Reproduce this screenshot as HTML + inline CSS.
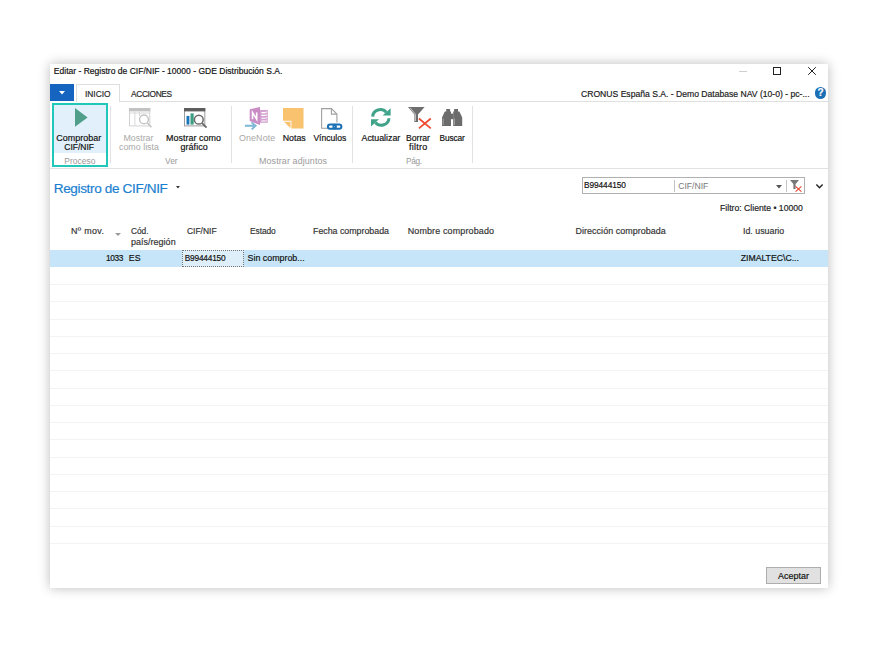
<!DOCTYPE html>
<html lang="es"><head><meta charset="utf-8"><title>Editar - Registro de CIF/NIF</title>
<style>
html,body{margin:0;padding:0;background:#fff;}
body{width:878px;height:652px;position:relative;overflow:hidden;font-family:"Liberation Sans",sans-serif;}
.win{position:absolute;left:50px;top:64px;width:778px;height:524px;background:#fff;box-shadow:0 0 11px rgba(0,0,0,.27);}
.abs{position:absolute;}
.t{position:absolute;white-space:pre;line-height:12px;-webkit-text-stroke:0.18px currentColor;}
.gl{position:absolute;left:50px;width:778px;height:1px;background:#f3f3f3;}
.sep{position:absolute;width:1px;background:#e2e2e2;top:106px;height:57px;}
svg{position:absolute;overflow:visible;}
</style></head><body>
<div class="win"></div>

<!-- title bar controls -->
<div class="abs" style="left:739px;top:70.6px;width:8px;height:1px;background:#cfcfcf"></div>
<div class="abs" style="left:773.3px;top:67px;width:5.6px;height:5.6px;border:1px solid #222;box-sizing:content-box"></div>
<svg style="left:807.5px;top:66.8px" width="8" height="8" viewBox="0 0 8 8"><path d="M0.2 0.2L7.8 7.8M7.8 0.2L0.2 7.8" stroke="#222" stroke-width="1" fill="none"/></svg>

<!-- tab row -->
<div class="abs" style="left:50px;top:83.7px;width:24px;height:17.3px;background:#1565c0"></div>
<svg style="left:58.6px;top:90.8px" width="6" height="4" viewBox="0 0 6 4"><path d="M0 0H6L3 3.6Z" fill="#fff"/></svg>
<div class="abs" style="left:118.5px;top:100.7px;width:709.5px;height:1px;background:#e0e0e0"></div>
<div class="abs" style="left:76.4px;top:83.7px;width:41.8px;height:17.8px;border:1px solid #dedede;border-bottom:none;background:#fff"></div>
<!-- help -->
<div class="abs" style="left:814.6px;top:86.8px;width:11.8px;height:11.8px;border-radius:50%;background:#1a6fb5"></div>
<span class="t" style="left:817.6px;top:86.9px;font-size:10px;font-weight:bold;color:#fff">?</span>

<!-- ribbon -->
<div class="abs" style="left:50px;top:167.8px;width:778px;height:1px;background:#e2e2e2"></div>
<div class="abs" style="left:52.1px;top:103.3px;width:52px;height:59.5px;border:2px solid #21c7b8;background:linear-gradient(#e1f0fa 0,#e1f0fa 48px,#fff 48px)"></div>
<div class="sep" style="left:110px"></div>
<div class="sep" style="left:230.8px"></div>
<div class="sep" style="left:352px"></div>
<div class="sep" style="left:472.3px"></div>

<!-- ICONS -->
<!-- play -->
<svg style="left:74.7px;top:108.1px" width="12.6" height="18.8" viewBox="0 0 12.6 18.8"><path d="M0 0L12.6 9.4L0 18.8Z" fill="#4f9f8b"/></svg>
<!-- mostrar como lista (disabled) -->
<svg style="left:128.9px;top:108.3px" width="23" height="20" viewBox="0 0 23 20">
<rect x="0.5" y="0.5" width="20.3" height="17.4" fill="#fff" stroke="#d2d2d2"/>
<rect x="0" y="0" width="21.3" height="3.4" fill="#c2c2c2"/>
<path d="M5.9 3.4V17.5M10.5 3.4V8M0.5 5H20.5" stroke="#d8d8d8" stroke-width="1" fill="none"/>
<circle cx="15" cy="11.4" r="4.4" fill="#fff" stroke="#c4c4c4" stroke-width="1.4"/>
<path d="M18.3 14.8L22.4 19.3" stroke="#c4c4c4" stroke-width="1.7"/>
</svg>
<!-- mostrar como grafico -->
<svg style="left:183.8px;top:108.3px" width="23" height="20" viewBox="0 0 23 20">
<rect x="0.5" y="0.5" width="20.3" height="17.4" fill="#fff" stroke="#9c9c9c"/>
<rect x="0" y="0" width="21.3" height="3.4" fill="#5e5e5e"/>
<rect x="2.5" y="7.9" width="2.9" height="8.7" fill="#1b75bb"/>
<rect x="6.5" y="5.4" width="3.2" height="11.2" fill="#3d9e84"/>
<circle cx="14.8" cy="11.7" r="4.4" fill="#fff" stroke="#6a6a6a" stroke-width="1.5"/>
<path d="M18.1 15.1L22.5 19.7" stroke="#6a6a6a" stroke-width="1.8"/>
</svg>
<!-- onenote (disabled) -->
<svg style="left:244px;top:106px" width="26" height="26" viewBox="0 0 26 26">
<path d="M16 3.9H23.8V16.8H16Z" fill="#d3a2d0"/>
<path d="M17.4 6.6H21.6M17.4 9.4H21.6M17.4 12.2H21.6M17.4 15H21.6" stroke="#fff" stroke-width="1.1"/>
<path d="M22.3 5.4V15.6" stroke="#fff" stroke-width="0.8" stroke-dasharray="1.6 1.2"/>
<path d="M5.7 3.2L16 1.1V18.9L5.7 15.1Z" fill="#c98cc5"/>
<path d="M8.5 13.2V6.6L12.7 13.2V6.6" stroke="#fff" stroke-width="1.6" fill="none"/>
<path d="M0.9 19.8H11M7.6 16.4L11.6 19.8L7.6 23.4" stroke="#7fb6d6" stroke-width="1.9" fill="none"/>
</svg>
<!-- notas -->
<svg style="left:283.3px;top:107.9px" width="21" height="21" viewBox="0 0 21 21">
<path d="M0 0H20.5V20.5H8.4V12.8H0Z" fill="#f8c26f"/>
<path d="M0.9 13.7H7.5V20.3Z" fill="#f8c26f"/>
</svg>
<!-- vinculos -->
<svg style="left:321.1px;top:107.6px" width="22" height="23" viewBox="0 0 22 23">
<path d="M7 20.2H0.6V0.6H10.4L15.9 6.1V14.5" fill="none" stroke="#a0a0a0" stroke-width="1.1"/>
<path d="M10.4 0.6V6.1H15.9" fill="none" stroke="#a0a0a0" stroke-width="1.1"/>
<rect x="6.9" y="16.4" width="8" height="4.4" rx="2.2" fill="none" stroke="#1a6fb5" stroke-width="2"/>
<rect x="12.4" y="16.4" width="8" height="4.4" rx="2.2" fill="none" stroke="#1a6fb5" stroke-width="2"/>
</svg>
<!-- actualizar -->
<svg style="left:371.2px;top:108.2px" width="20" height="19" viewBox="0 0 20 19">
<path d="M1.7 8.6A7.6 7.2 0 0 1 15.2 4.3" fill="none" stroke="#3fa389" stroke-width="3"/>
<path d="M19.6 0.2V7.6H11.6Z" fill="#3fa389"/>
<path d="M17.9 10.2A7.6 7.2 0 0 1 4.4 14.5" fill="none" stroke="#3fa389" stroke-width="3"/>
<path d="M0 18.6V11.2H8Z" fill="#3fa389"/>
</svg>
<!-- borrar filtro -->
<svg style="left:407.7px;top:107px" width="24" height="23" viewBox="0 0 24 23">
<path d="M0 0H16.6L10 7.6V15H6.4V7.6Z" fill="#6e6e6e"/>
<path d="M2.2 1L7.4 7.2V14" stroke="#d6d6d6" stroke-width="0.9" fill="none"/>
<path d="M10.9 11.5L22.8 21.4M22.8 11.5L10.9 21.4" stroke="#f04a30" stroke-width="1.7" fill="none"/>
</svg>
<!-- buscar -->
<svg style="left:442.2px;top:108.9px" width="21" height="17" viewBox="0 0 21 17">
<path d="M4.2 0H8.1V2.4H9V16.9H0V8.6L2.8 2.4H4.2Z" fill="#6c6c6c"/>
<path d="M16 0H12.100V2.4H11.2V16.9H20.2V8.600L17.400 2.4H16Z" fill="#6c6c6c"/>
<rect x="9" y="4.600" width="2.2" height="5.6" fill="#6c6c6c"/>
<path d="M1.200 9.500V16M12.400 9.500V16" stroke="#a9a9a9" stroke-width="0.9"/>
</svg>

<!-- page title arrow -->
<svg style="left:176px;top:186px" width="4" height="3" viewBox="0 0 4 3"><path d="M0 0H3.900L1.950 2.500Z" fill="#333"/></svg>

<!-- filter box -->
<div class="abs" style="left:581.5px;top:177.2px;width:223px;height:17px;border:1px solid #b0b0b0;background:#fff;box-sizing:border-box"></div>
<div class="abs" style="left:674.3px;top:179.5px;width:1px;height:12.5px;background:#c4c4c4"></div>
<div class="abs" style="left:786px;top:179.5px;width:1px;height:12.5px;background:#c4c4c4"></div>
<svg style="left:775.8px;top:184.6px" width="6" height="4" viewBox="0 0 6 4"><path d="M0 0H6L3 3.4Z" fill="#555"/></svg>
<svg style="left:790px;top:180.2px" width="12" height="12" viewBox="0 0 12 12">
<path d="M0 0H9L5.6 4V9H3.4V4Z" fill="#777"/>
<path d="M5.6 6.4L11.4 11.6M11.4 6.4L5.6 11.6" stroke="#e8452f" stroke-width="1.1" fill="none"/>
</svg>
<svg style="left:816.3px;top:183.6px" width="7" height="5" viewBox="0 0 7 5"><path d="M0.4 0.6L3.5 3.8L6.6 0.6" stroke="#222" stroke-width="1.4" fill="none"/></svg>

<!-- sort arrow -->
<svg style="left:114.8px;top:233px" width="6" height="3" viewBox="0 0 6 3"><path d="M0 0H6L3 3Z" fill="#9a9a9a"/></svg>

<!-- selected row -->
<div class="abs" style="left:50px;top:249.8px;width:778px;height:17.5px;background:#c6e5f8"></div>
<div class="abs" style="left:182.2px;top:250.2px;width:62px;height:17.1px;border:1px dotted #777;background:#deeffa;box-sizing:border-box"></div>
<div class="gl" style="top:283.97px"></div>
<div class="gl" style="top:301.24px"></div>
<div class="gl" style="top:318.51px"></div>
<div class="gl" style="top:335.78px"></div>
<div class="gl" style="top:353.05px"></div>
<div class="gl" style="top:370.32px"></div>
<div class="gl" style="top:387.59px"></div>
<div class="gl" style="top:404.86px"></div>
<div class="gl" style="top:422.13px"></div>
<div class="gl" style="top:439.40px"></div>
<div class="gl" style="top:456.67px"></div>
<div class="gl" style="top:473.94px"></div>
<div class="gl" style="top:491.21px"></div>
<div class="gl" style="top:508.48px"></div>
<div class="gl" style="top:525.75px"></div>
<div class="gl" style="top:543.02px"></div>

<!-- button -->
<div class="abs" style="left:766.2px;top:567.1px;width:54.8px;height:16.8px;border:1px solid #adadad;background:#e1e1e1;box-sizing:border-box"></div>

<span class="t" style="left:53.8px;top:65.00px;font-size:8.54px;letter-spacing:0.000px;color:#111;">Editar - Registro de CIF/NIF - 10000 - GDE Distribución S.A.</span>
<span class="t" style="left:84.9px;top:88.00px;font-size:8.44px;letter-spacing:0.000px;color:#2a2a2a;">INICIO</span>
<span class="t" style="left:131.1px;top:88.00px;font-size:8.34px;letter-spacing:-0.353px;color:#2a2a2a;">ACCIONES</span>
<span class="t" style="left:581.0px;top:88.00px;font-size:8.61px;letter-spacing:0.000px;color:#1a1a1a;">CRONUS España S.A. - Demo Database NAV (10-0) - pc-...</span>
<span class="t" style="left:56.3px;top:132.00px;font-size:8.94px;letter-spacing:0.045px;color:#111;">Comprobar</span>
<span class="t" style="left:64.3px;top:141.00px;font-size:8.49px;letter-spacing:0.000px;color:#111;">CIF/NIF</span>
<span class="t" style="left:64.3px;top:155.00px;font-size:8.48px;letter-spacing:0.000px;color:#9a9a9a;-webkit-text-stroke:0;">Proceso</span>
<span class="t" style="left:123.5px;top:132.00px;font-size:8.85px;letter-spacing:0.000px;color:#a8a8a8;-webkit-text-stroke:0;">Mostrar</span>
<span class="t" style="left:119.0px;top:141.00px;font-size:8.89px;letter-spacing:0.000px;color:#a8a8a8;-webkit-text-stroke:0;">como lista</span>
<span class="t" style="left:166.0px;top:132.00px;font-size:8.94px;letter-spacing:0.030px;color:#111;">Mostrar como</span>
<span class="t" style="left:180.4px;top:141.00px;font-size:8.94px;letter-spacing:0.092px;color:#111;">gráfico</span>
<span class="t" style="left:165.0px;top:155.00px;font-size:8.46px;letter-spacing:0.000px;color:#9a9a9a;-webkit-text-stroke:0;">Ver</span>
<span class="t" style="left:239.0px;top:132.00px;font-size:8.94px;letter-spacing:0.084px;color:#a8a8a8;-webkit-text-stroke:0;">OneNote</span>
<span class="t" style="left:282.7px;top:132.00px;font-size:8.80px;letter-spacing:0.000px;color:#111;">Notas</span>
<span class="t" style="left:313.4px;top:132.00px;font-size:8.60px;letter-spacing:-0.000px;color:#111;">Vínculos</span>
<span class="t" style="left:259.0px;top:155.00px;font-size:8.94px;letter-spacing:0.106px;color:#9a9a9a;-webkit-text-stroke:0;">Mostrar adjuntos</span>
<span class="t" style="left:361.5px;top:132.00px;font-size:8.84px;letter-spacing:0.000px;color:#111;">Actualizar</span>
<span class="t" style="left:406.0px;top:132.00px;font-size:8.64px;letter-spacing:0.000px;color:#111;">Borrar</span>
<span class="t" style="left:409.0px;top:141.00px;font-size:8.94px;letter-spacing:0.281px;color:#111;">filtro</span>
<span class="t" style="left:439.6px;top:132.00px;font-size:8.34px;letter-spacing:-0.173px;color:#111;">Buscar</span>
<span class="t" style="left:406.0px;top:155.00px;font-size:8.34px;letter-spacing:-0.387px;color:#9a9a9a;-webkit-text-stroke:0;">Pág.</span>
<span class="t" style="left:53.7px;top:183.00px;font-size:13.60px;letter-spacing:-0.368px;color:#1b7fd0;">Registro de CIF/NIF</span>
<span class="t" style="left:584.0px;top:179.00px;font-size:8.34px;letter-spacing:-0.085px;color:#111;">B99444150</span>
<span class="t" style="left:678.2px;top:180.00px;font-size:8.63px;letter-spacing:0.000px;color:#777;-webkit-text-stroke:0;">CIF/NIF</span>
<span class="t" style="left:720.0px;top:202.00px;font-size:8.67px;letter-spacing:0.000px;color:#222;">Filtro: Cliente • 10000</span>
<span class="t" style="left:71.0px;top:225.00px;font-size:8.94px;letter-spacing:0.345px;color:#333;">Nº mov.</span>
<span class="t" style="left:131.0px;top:225.00px;font-size:8.34px;letter-spacing:-0.040px;color:#333;">Cód.</span>
<span class="t" style="left:131.0px;top:236.00px;font-size:8.94px;letter-spacing:0.045px;color:#333;">país/región</span>
<span class="t" style="left:187.0px;top:225.00px;font-size:8.46px;letter-spacing:0.000px;color:#333;">CIF/NIF</span>
<span class="t" style="left:250.1px;top:225.00px;font-size:8.34px;letter-spacing:-0.074px;color:#333;">Estado</span>
<span class="t" style="left:313.0px;top:225.00px;font-size:8.82px;letter-spacing:0.000px;color:#333;">Fecha comprobada</span>
<span class="t" style="left:407.7px;top:225.00px;font-size:8.94px;letter-spacing:0.155px;color:#333;">Nombre comprobado</span>
<span class="t" style="left:575.5px;top:225.00px;font-size:8.94px;letter-spacing:0.053px;color:#333;">Dirección comprobada</span>
<span class="t" style="left:743.0px;top:225.00px;font-size:8.84px;letter-spacing:0.000px;color:#333;">Id. usuario</span>
<span class="t" style="left:106.0px;top:252.00px;font-size:8.34px;letter-spacing:-0.386px;color:#111;">1033</span>
<span class="t" style="left:128.8px;top:252.00px;font-size:8.77px;letter-spacing:0.000px;color:#111;">ES</span>
<span class="t" style="left:184.7px;top:252.00px;font-size:8.34px;letter-spacing:-0.210px;color:#111;">B99444150</span>
<span class="t" style="left:247.6px;top:252.00px;font-size:8.86px;letter-spacing:0.000px;color:#111;">Sin comprob...</span>
<span class="t" style="left:740.7px;top:252.00px;font-size:8.70px;letter-spacing:0.000px;color:#111;">ZIMALTEC\C...</span>
<span class="t" style="left:778.0px;top:570.00px;font-size:8.94px;letter-spacing:0.029px;color:#111;">Aceptar</span>
</body></html>
